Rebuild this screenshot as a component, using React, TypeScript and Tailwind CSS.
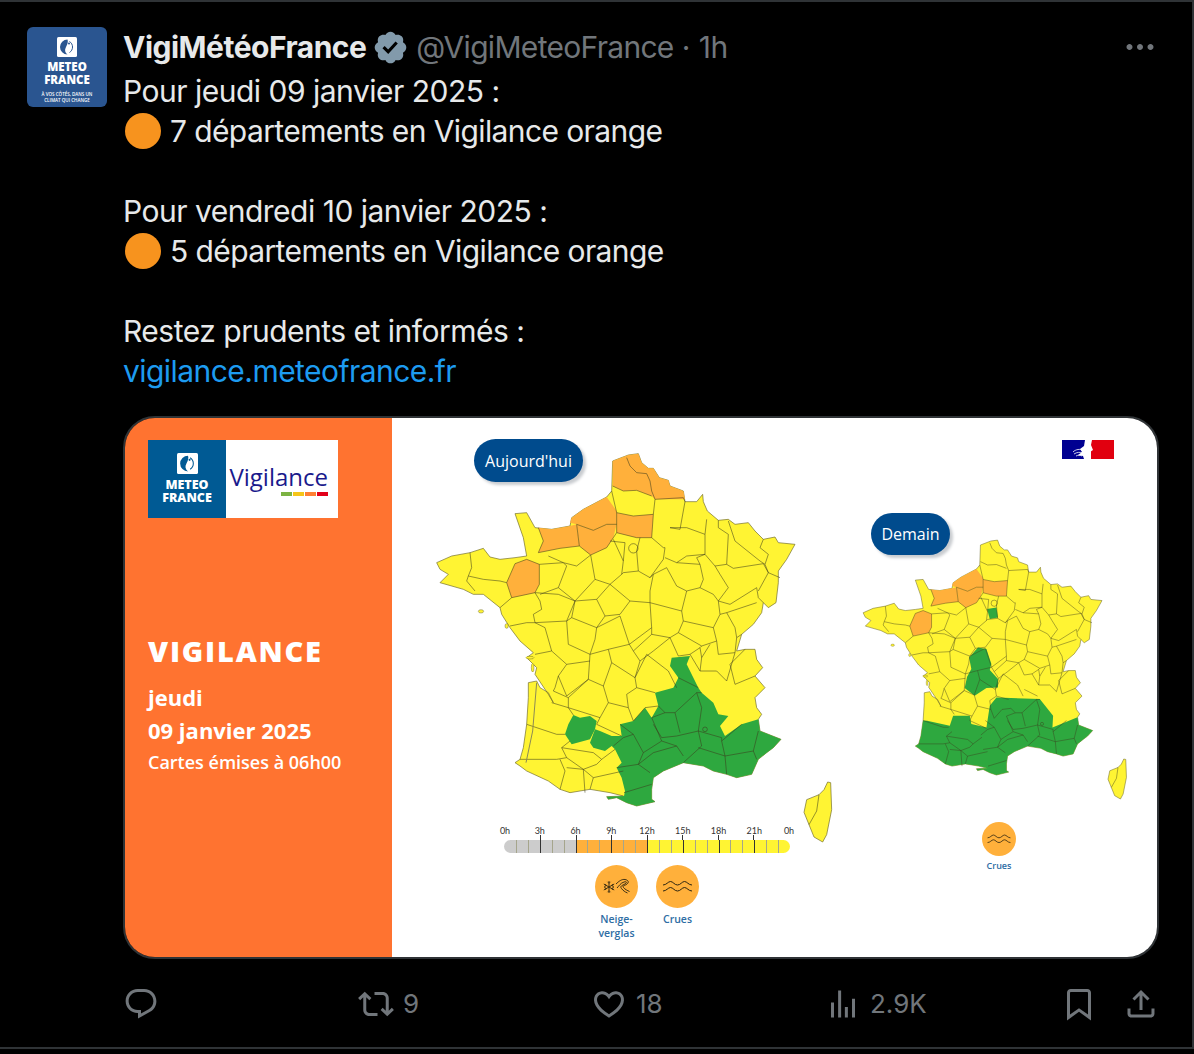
const outline =
  "625,72 655,68 665,95 685,112 700,112 718,140 745,148 750,165 790,180 795,212 830,212 848,190 850,212 862,240 895,268 925,265 945,280 985,275 1005,300 1030,325 1065,318 1075,335 1125,340 1100,385 1075,420 1075,455 1068,515 1045,530 1030,515 1025,545 1000,580 965,610 950,660 975,655 1005,655 1010,685 1028,710 1005,735 1035,770 1005,800 1010,830 1025,850 1015,865 1020,900 1083,925 1060,950 1040,965 1015,985 995,1030 950,1040 920,1030 880,1020 850,1005 790,995 730,1020 700,1040 695,1075 695,1105 705,1112 650,1125 620,1115 590,1100 565,1105 560,1097 610,1095 570,1085 510,1075 450,1085 420,1075 385,1050 320,1020 300,1005 285,995 300,985 310,950 320,880 325,800 325,755 350,750 360,770 385,785 400,815 385,790 345,730 350,710 320,680 340,665 300,630 270,590 245,550 240,530 190,490 160,490 130,475 60,455 85,430 60,415 50,395 95,375 150,365 190,352 210,378 240,385 285,380 320,375 310,320 285,248 320,245 345,290 395,295 450,285 455,260 490,235 560,198 575,180 578,90";

const corsica = "1223,1053 1232,1055 1235,1136 1220,1211 1208,1233 1182,1218 1167,1181 1152,1144 1160,1106 1197,1091 1212,1076";

const seineMaritime = "455,260 490,235 560,198 590,240 590,280 560,280 520,298 470,280 450,275";
const eure = "470,280 520,298 560,280 590,280 580,320 560,350 512,372 478,345";
const oise = "590,245 640,255 700,250 695,320 650,320 590,305";
const calvados = "355,290 395,295 450,285 470,280 478,345 420,352 355,365 370,330";
const ille = "285,398 320,385 358,400 358,460 345,485 275,500 260,455";
const nord = "578,90 625,72 655,68 665,95 685,112 700,112 718,140 745,148 750,165 790,180 795,205 705,205 695,195 650,178 610,180 578,165";

const coastSouth =
  "1015,865 1020,900 1083,925 1060,950 1040,965 1015,985 995,1030 950,1040 920,1030 880,1020 850,1005 790,995 730,1020 700,1040 695,1075 695,1105 705,1112 650,1125 620,1115 590,1100 565,1105 560,1097";

const greenToday = [
  `755,680 810,675 800,700 835,770 845,785 880,815 895,850 925,855 900,885 915,915 965,880 ${coastSouth} 612,1095 615,1080 605,1040 590,1010 605,995 585,955 575,945 555,960 520,950 510,935 525,895 540,900 575,915 605,915 600,880 640,870 675,830 695,860 715,825 705,785 760,770 775,740 750,705`,
  "460,852 480,860 510,855 530,870 525,895 510,925 455,940 435,910 445,880",
];

const greenTomorrow = [
  `338,881 440,903 455,858 530,858 537,896 605,911 620,813 650,776 845,783 905,858 902,911 ${coastSouth} 610,1095 570,1085 510,1075 450,1085 420,1075 385,1050 320,1020 300,1005 285,995 300,985 310,950 320,880`,
  "567,551 605,558 627,626 620,653 657,693 657,731 605,734 552,768 507,734 518,683 537,648 527,596",
  "608,378 650,371 657,416 620,423",
];

const orangeToday = [nord, seineMaritime, eure, oise, calvados, ille];
const orangeTomorrow = [seineMaritime, eure, oise, calvados, ille];

const borders = [
  "620,80 630,105 650,125 680,128 690,150 695,180 705,205",
  "578,165 610,180 650,178 695,195",
  "705,205 790,200 795,212",
  "575,180 590,245 640,255 700,250",
  "705,205 700,250 695,320 730,350",
  "590,245 590,305 650,320 695,320",
  "470,280 520,298 560,280 590,280",
  "470,280 478,345 512,372",
  "355,290 370,330 355,365 420,352 478,345",
  "512,372 560,350 580,320 590,305",
  "285,398 320,385 358,400 358,460 345,485 275,500 260,455 285,398",
  "150,365 155,410 145,435 140,450 165,480",
  "145,435 190,445 240,450 260,455",
  "275,500 240,530",
  "345,485 360,510 365,535 340,550 345,575 320,575 270,585",
  "345,575 440,570 465,510 415,490 345,485",
  "360,490 415,470 440,405 430,395 385,375",
  "358,400 430,395 470,405 512,372 525,445",
  "415,470 465,510 525,445 570,460 605,430 610,390 580,325",
  "570,330 615,335 610,390",
  "660,320 650,360 655,420 610,425 605,430",
  "655,420 690,440 730,385 735,350 730,350",
  "465,510 530,505 570,460",
  "530,505 555,555 600,550 630,510 570,460",
  "465,510 455,560 440,570",
  "455,560 530,590 555,555",
  "630,510 690,515 690,480 700,430 690,440",
  "700,430 740,410 770,465 800,480 785,540 690,515 695,590 628,640 600,555 530,590 525,625 510,670",
  "440,570 445,640 510,670 565,655 628,640",
  "750,290 800,290 855,310 855,370 800,375 770,395 735,380",
  "750,290 780,295 795,212",
  "855,310 860,265",
  "855,370 885,405 920,400 925,310 895,290 895,268",
  "925,270 945,330 1020,390 1035,400",
  "1030,325 1020,350 1045,370 1035,400 1045,425 1080,440",
  "920,400 940,412 1030,398 1045,425 1015,480",
  "770,395 840,400 830,380 855,370",
  "840,400 850,445 840,470 800,480",
  "885,405 900,430 925,470 895,510 880,490 840,470",
  "895,510 930,520 1010,470 1015,500 1030,515",
  "900,550 920,545 1010,515",
  "895,510 900,550 880,590 790,570 785,540",
  "920,545 945,590 950,620 965,610",
  "880,590 890,630 845,645 775,605 790,570",
  "775,605 750,620 695,610 695,590",
  "890,630 895,670 945,665 950,620",
  "628,640 640,660 695,610",
  "640,660 660,690 700,660 750,620 775,675 810,670 840,650 845,645",
  "840,650 845,680 870,640",
  "845,680 840,720 890,720 920,750 945,665",
  "930,700 975,655",
  "930,700 945,760 1005,735",
  "840,720 810,670",
  "565,655 575,695 645,740 660,690",
  "510,670 505,745 550,765 575,695",
  "510,690 440,700 415,735 440,795 505,745",
  "345,575 375,590 395,660 440,700",
  "345,670 395,660",
  "415,735 405,770 400,780 445,800 505,745",
  "445,800 445,830 540,860 565,815 550,765",
  "395,815 445,830 460,852",
  "320,880 410,910 435,910",
  "300,985 410,985 440,980 425,950 450,930",
  "425,950 520,965 545,985 530,1000 490,1015 440,980",
  "420,985 435,1020 420,1075",
  "440,1010 490,1015 495,1085",
  "490,1015 520,1040 610,1020",
  "520,1040 510,1075",
  "585,955 545,985",
  "565,815 625,830 620,790 650,770 645,740",
  "625,830 640,870 675,830 715,825",
  "650,770 705,785",
  "645,740 680,670 745,720 770,770",
  "540,860 530,880 605,915",
  "715,825 735,845 765,845 830,785 845,785",
  "765,845 780,905",
  "830,785 845,830 835,900",
  "700,880 725,920 770,915 835,900 845,945 790,995",
  "600,880 640,910 670,965 725,930 695,860 735,845",
  "580,945 610,920 640,910",
  "670,965 655,1000 700,965 770,945 790,975",
  "590,1010 655,1000 690,1025",
  "612,1085 695,1060",
  "725,930 770,945",
  "835,950 915,975 920,1030",
  "915,975 1000,960 1010,985",
  "1000,960 1015,900",
  "905,930 915,975",
  "905,930 965,880",
  "835,900 905,920 905,930",
  "775,740 835,770",
  "1197,1091 1190,1140 1167,1181",
];

const hours = ["0h", "3h", "6h", "9h", "12h", "15h", "18h", "21h", "0h"];
const ticks = Array.from({ length: 23 }, (_, i) => i + 1);

function FranceMap({ orange, green, line, lagoon, className }: { orange: string[]; green: string[]; line: number; lagoon?: boolean; className: string }) {
  return (
    <svg viewBox="0 0 1260 1260" className={className}>
      <polygon points={outline} fill="#fff433" stroke="#6e6a2a" strokeWidth={line} strokeLinejoin="round" />
      <polygon points={corsica} fill="#fff433" stroke="#6e6a2a" strokeWidth={line} strokeLinejoin="round" />
      {orange.map((p, i) => (
        <polygon key={i} points={p} fill="#ffb03b" />
      ))}
      {green.map((p, i) => (
        <polygon key={i} points={p} fill="#2ea83f" />
      ))}
      <g fill="none" stroke="#3a3a1c" strokeOpacity="0.8" strokeWidth={line} strokeLinejoin="round">
        {borders.map((p, i) => (
          <polyline key={i} points={p} />
        ))}
        <circle cx="640" cy="352" r="14" />
        <circle cx="855" cy="895" r="7" />
      </g>
      {lagoon && <polyline points="350,755 338,900 318,995" fill="none" stroke="#8d8a55" strokeWidth={line * 1.5} />}
      <g fill="#fff433" stroke="#6e6a2a" strokeWidth={line * 0.7}>
        <ellipse cx="183" cy="541" rx="8" ry="5" />
        <ellipse cx="260" cy="585" rx="5" ry="7" />
        <ellipse cx="330" cy="680" rx="12" ry="4" />
        <ellipse cx="338" cy="710" rx="4" ry="13" />
      </g>
    </svg>
  );
}

function LogoMark({ color, className }: { color: string; className: string }) {
  return (
    <svg viewBox="0 0 20 20" className={className}>
      <rect width="20" height="20" rx="1.5" fill="#fff" />
      <path d="M10.500 2.500a7.500 7.500 0 0 0 0 15c-2.500-2-3.200-4.500-1.500-7.500s2.200-5.500 1.500-7.500z" fill={color} />
      <path d="M12.500 4.500a6.500 6.500 0 0 1 0 11" fill="none" stroke={color} strokeWidth="1" />
      <circle cx="12" cy="6.500" r="1" fill={color} />
    </svg>
  );
}

function CruesIcon({ className }: { className: string }) {
  return (
    <svg viewBox="0 0 43 43" className={className}>
      <circle cx="21.5" cy="21.5" r="21.5" fill="#ffb03b" />
      <g fill="none" stroke="#2b2410" strokeWidth="1">
        <path d="M7 20c3.500 0 5-3.500 7.500-3.500s4 3.500 7 3.500 4.500-3.500 7-3.500 4 3.500 7.500 3.500" />
        <path d="M7 26c3.500 0 5-3.500 7.500-3.500s4 3.500 7 3.500 4.500-3.500 7-3.500 4 3.500 7.500 3.500" />
      </g>
    </svg>
  );
}

function SnowIcon({ className }: { className: string }) {
  return (
    <svg viewBox="0 0 43 43" className={className}>
      <circle cx="21.5" cy="21.5" r="21.5" fill="#ffb03b" />
      <g fill="none" stroke="#2b2410" strokeWidth="0.9">
        <path d="M14 16v12M8.800 19l10.400 6M8.800 25l10.400-6" />
        <path d="M12.500 16.800l1.500 1.500 1.500-1.500M12.500 27.200l1.500-1.500 1.500 1.500M9 21.500l2-.5-.5-2M19 22.500l-2 .5.500 2M9 22.500l2 .5-.5 2M19 21.500l-2-.5.500-2" strokeWidth="0.7" />
        <path d="M21 19c3-3 6-5 9-4.500s4.500 2.500 2 4.500-5 1.500-3.500 3.500 4 3 6 4" />
        <path d="M22 23c2-2 3.500-5 7-6s3 1 0 2.500-4 2-2.500 4 3.500 3.500 6 4.500" />
      </g>
    </svg>
  );
}

function Pill({ label, className }: { label: string; className: string }) {
  return (
    <div
      className={`absolute flex items-center justify-center rounded-full bg-[#004b8d] text-[16px] font-medium text-white shadow-[3px_3px_3px_#c9ccd0] [font-family:'Open_Sans',sans-serif] ${className}`}
    >
      {label}
    </div>
  );
}

function Timeline() {
  return (
    <div className="absolute left-[112px] top-[407px] flex w-[286px] flex-col">
      <div className="flex justify-between text-[9px] leading-[11px] text-[#333] [font-family:Lato,sans-serif]">
        {hours.map((h, i) => (
          <span key={i} className="flex w-0 justify-center first:translate-x-[1px] last:-translate-x-[1px]">
            {h}
          </span>
        ))}
      </div>
      <div className="relative mt-[4px] flex h-[13px] overflow-hidden rounded-full">
        <div className="w-[72px] bg-[#cccccc]" />
        <div className="w-[71px] bg-[#ffb03b]" />
        <div className="flex-1 bg-[#fff433]" />
        <div className="absolute inset-0 grid grid-cols-24">
          <span />
          {ticks.map((t) => (
            <span key={t} className={t % 3 === 0 ? "border-l border-[#333]" : "border-l border-[#a5a58c]"} />
          ))}
        </div>
      </div>
      <div className="relative flex h-0 justify-between px-[36px]">
        {[3, 6, 9, 12, 15, 18, 21].map((t) => (
          <span key={t} className="-mt-[18px] h-[5px] w-px bg-[#333]" />
        ))}
      </div>
    </div>
  );
}

function Action({ d, count, className }: { d: string; count?: string; className: string }) {
  return (
    <div className={`flex items-center gap-[9px] text-[26px] text-[#71767b] ${className}`}>
      <svg viewBox="0 0 24 24" className="h-9 w-9 shrink-0 fill-[#71767b]">
        <path d={d} />
      </svg>
      {count && <span>{count}</span>}
    </div>
  );
}

export default function App() {
  return (
    <div className="h-[1054px] w-[1194px] overflow-hidden bg-black [font-family:Inter,sans-serif]">
      <div className="h-[1049px] border-y-2 border-r-2 border-[#2f3336] pl-[27px] pt-[25px]">
        <div className="flex gap-4">
          {/* Avatar */}
          <div className="flex h-20 w-20 shrink-0 flex-col items-center rounded-md bg-[#2a5590] pt-[10px] text-white [font-family:'Open_Sans',sans-serif]">
            <LogoMark color="#2a5590" className="h-[20px] w-[20px]" />
            <div className="mt-[4px] text-center text-[11.5px] font-extrabold leading-[12.5px]">
              METEO
              <br />
              FRANCE
            </div>
            <div className="mt-[5px] text-center text-[4.5px] font-semibold uppercase leading-[6px]">
              À vos côtés, dans un
              <br />
              climat qui change
            </div>
          </div>

          <div className="w-[1036px]">
            <div className="mb-1 flex h-10 items-center text-[30px] tracking-[-0.5px]">
              <span className="font-bold text-[#e7e9ea]">VigiMétéoFrance</span>
              <svg viewBox="0 0 24 24" className="ml-[6px] h-[37px] w-[37px]">
                <path
                  fill="#829aab"
                  d="M22.25 12c0-1.43-.88-2.67-2.19-3.34.46-1.39.2-2.9-.81-3.91s-2.52-1.27-3.91-.81c-.66-1.31-1.91-2.19-3.34-2.19s-2.67.88-3.33 2.19c-1.4-.46-2.91-.2-3.92.81s-1.26 2.52-.8 3.91c-1.31.67-2.2 1.91-2.2 3.34s.89 2.67 2.2 3.34c-.46 1.39-.21 2.9.8 3.91s2.52 1.26 3.91.81c.67 1.31 1.91 2.19 3.34 2.19s2.68-.88 3.34-2.19c1.39.45 2.9.2 3.91-.81s1.27-2.52.81-3.91c1.31-.67 2.19-1.91 2.19-3.34zm-11.71 4.2L6.8 12.46l1.41-1.42 2.26 2.26 4.8-5.23 1.47 1.36-6.2 6.77z"
                />
              </svg>
              <span className="ml-[7px] tracking-[-0.7px] text-[#71767b]">@VigiMeteoFrance</span>
              <span className="ml-[8px] text-[#71767b]">·</span>
              <span className="ml-[9px] text-[#71767b]">1h</span>
              <svg viewBox="0 0 24 24" className="ml-auto mr-[1px] h-9 w-9 fill-[#71767b]">
                <path d="M3 12c0-1.100.9-2 2-2s2 .9 2 2-.9 2-2 2-2-.9-2-2zm9 2c1.100 0 2-.9 2-2s-.9-2-2-2-2 .9-2 2 .9 2 2 2zm7 0c1.100 0 2-.9 2-2s-.9-2-2-2-2 .9-2 2 .9 2 2 2z" />
              </svg>
            </div>

            <div className="text-[30px] leading-[40px] tracking-[-0.5px] text-[#e7e9ea]">
              <p>Pour jeudi 09 janvier 2025 :</p>
              <p className="flex items-center tracking-[-0.6px]">
                <span className="ml-[2px] mr-[9px] h-9 w-9 rounded-full bg-[#f7931e]" />7 départements en Vigilance orange
              </p>
              <p className="mt-10">Pour vendredi 10 janvier 2025 :</p>
              <p className="flex items-center tracking-[-0.6px]">
                <span className="ml-[2px] mr-[9px] h-9 w-9 rounded-full bg-[#f7931e]" />5 départements en Vigilance orange
              </p>
              <p className="mt-10">Restez prudents et informés :</p>
              <p className="tracking-[-0.55px] text-[#1d9bf0]">vigilance.meteofrance.fr</p>
            </div>

            {/* Card image */}
            <div className="mt-[25px] flex h-[543px] overflow-hidden rounded-[32px] border-2 border-[#2f3336]">
              <div className="w-[267px] shrink-0 bg-[#ff7330] pl-[23px] pt-[22px] text-white [font-family:'Open_Sans',sans-serif]">
                <div className="flex h-[78px] w-[190px] bg-white">
                  <div className="flex w-[78px] flex-col items-center bg-[#005a94] pt-[13px]">
                    <LogoMark color="#005a94" className="h-[21px] w-[21px]" />
                    <div className="mt-[4px] text-center text-[12.5px] font-extrabold leading-[13px]">
                      METEO
                      <br />
                      FRANCE
                    </div>
                  </div>
                  <div className="flex flex-1 flex-col items-end pr-[10px] pt-[22px] text-[#1a1a8c]">
                    <span className="text-[24px] leading-[30px]">Vigilance</span>
                    <div className="flex gap-[1px]">
                      <span className="h-[4px] w-[11px] bg-[#7cb342]" />
                      <span className="h-[4px] w-[11px] bg-[#f5c518]" />
                      <span className="h-[4px] w-[11px] bg-[#ff7f32]" />
                      <span className="h-[4px] w-[11px] bg-[#e2001a]" />
                    </div>
                  </div>
                </div>
                <h2 className="mt-[115px] text-[29px] font-extrabold leading-[36px] tracking-[1.8px]">VIGILANCE</h2>
                <p className="mt-[12px] text-[22px] font-bold leading-[33px]">
                  jeudi
                  <br />
                  09 janvier 2025
                </p>
                <p className="mt-[3px] text-[18px] font-semibold leading-[24px]">Cartes émises à 06h00</p>
              </div>

              <div className="relative flex-1 bg-white">
                <FranceMap orange={orangeToday} green={greenToday} line={2} lagoon className="absolute left-[28px] top-[13px] h-[420px] w-[420px]" />
                <FranceMap orange={orangeTomorrow} green={greenTomorrow} line={2.4} className="absolute left-[460px] top-[107px] h-[280px] w-[280px]" />
                <Pill label="Aujourd'hui" className="left-[82px] top-[21px] h-[43px] w-[109px]" />
                <Pill label="Demain" className="left-[479px] top-[95px] h-[42px] w-[79px]" />

                {/* Flag */}
                <svg viewBox="0 0 52 19" className="absolute left-[670px] top-[22px] h-[19px] w-[52px]">
                  <rect width="23" height="19" fill="#000091" />
                  <rect x="29" width="23" height="19" fill="#e1000f" />
                  <path d="M23 0h7l-1 5 2 5-3 2 1 7h-7l-1-3-5-1 4-3-2-3 4-3z" fill="#fff" />
                  <path d="M11 12c3-3 7-3 10-2M12 14c3-2 6-2 9-1M14 16c2-1 4-1 6 0" stroke="#fff" strokeWidth="0.8" fill="none" />
                </svg>

                <Timeline />

                <div className="absolute left-[203px] top-[447px] flex gap-[18px] text-center text-[10.5px] font-semibold leading-[14px] text-[#2e6da4] [font-family:'Open_Sans',sans-serif]">
                  <div className="flex w-[43px] flex-col items-center gap-[4px]">
                    <SnowIcon className="h-[43px] w-[43px]" />
                    <span>
                      Neige-
                      <br />
                      verglas
                    </span>
                  </div>
                  <div className="flex w-[43px] flex-col items-center gap-[4px]">
                    <CruesIcon className="h-[43px] w-[43px]" />
                    <span>Crues</span>
                  </div>
                </div>

                <div className="absolute left-[590px] top-[404px] flex w-[34px] flex-col items-center gap-[4px] text-[9px] font-semibold leading-[12px] text-[#2e6da4] [font-family:'Open_Sans',sans-serif]">
                  <CruesIcon className="h-[34px] w-[34px]" />
                  <span>Crues</span>
                </div>
              </div>
            </div>

            {/* Actions */}
            <div className="mt-[25px] flex">
              <Action
                className="w-[235px]"
                d="M1.751 10c0-4.42 3.584-8 8.005-8h4.366c4.49 0 8.129 3.64 8.129 8.13 0 2.96-1.607 5.68-4.196 7.11l-8.054 4.46v-3.69h-.067c-4.49.1-8.183-3.51-8.183-8.01zm8.005-6c-3.317 0-6.005 2.69-6.005 6 0 3.37 2.77 6.08 6.138 6.01l.351-.01h1.761v2.3l5.087-2.81c1.951-1.08 3.163-3.13 3.163-5.36 0-3.39-2.744-6.13-6.129-6.13H9.756z"
              />
              <Action
                className="w-[233px]"
                count="9"
                d="M4.5 3.88l4.432 4.14-1.364 1.46L5.5 7.55V16c0 1.1.896 2 2 2H13v2H7.5c-2.209 0-4-1.79-4-4V7.55L1.432 9.48.068 8.02 4.5 3.88zM16.5 6H11V4h5.5c2.209 0 4 1.79 4 4v8.45l2.068-1.93 1.364 1.46-4.432 4.14-4.432-4.14 1.364-1.46 2.068 1.93V8c0-1.1-.896-2-2-2z"
              />
              <Action
                className="w-[234px]"
                count="18"
                d="M16.697 5.5c-1.222-.06-2.679.51-3.89 2.16l-.805 1.09-.806-1.09C9.984 6.01 8.526 5.44 7.304 5.5c-1.243.07-2.349.78-2.91 1.91-.552 1.12-.633 2.78.479 4.82 1.074 1.97 3.257 4.27 7.129 6.61 3.87-2.34 6.052-4.64 7.126-6.61 1.111-2.04 1.03-3.7.477-4.82-.561-1.13-1.666-1.84-2.908-1.91zm4.187 7.69c-1.351 2.48-4.001 5.12-8.379 7.67l-.503.3-.504-.3c-4.379-2.55-7.029-5.19-8.382-7.67-1.36-2.5-1.41-4.86-.514-6.67.887-1.79 2.647-2.91 4.601-3.01 1.651-.09 3.368.56 4.798 2.01 1.429-1.45 3.146-2.1 4.796-2.01 1.954.1 3.714 1.22 4.601 3.01.896 1.81.846 4.17-.514 6.67z"
              />
              <Action
                className="w-[236px]"
                count="2.9K"
                d="M8.75 21V3h2v18h-2zM18 21V8.5h2V21h-2zM4 21l.004-10h2L6 21H4zm9.248 0v-7h2v7h-2z"
              />
              <Action
                className="w-[62px]"
                d="M4 4.5C4 3.12 5.119 2 6.5 2h11C18.881 2 20 3.12 20 4.5v18.44l-8-5.71-8 5.71V4.5zM6.5 4c-.276 0-.5.22-.5.5v14.56l6-4.29 6 4.29V4.5c0-.28-.224-.5-.5-.5h-11z"
              />
              <Action
                className="w-9"
                d="M12 2.59l5.7 5.7-1.41 1.42L13 6.41V16h-2V6.41l-3.3 3.3-1.41-1.42L12 2.59zM21 15l-.02 3.51c0 1.38-1.12 2.49-2.5 2.49H5.5C4.11 21 3 19.88 3 18.5V15h2v3.5c0 .28.22.5.5.5h12.98c.28 0 .5-.22.5-.5L19 15h2z"
              />
            </div>
          </div>
        </div>
      </div>
    </div>
  );
}
